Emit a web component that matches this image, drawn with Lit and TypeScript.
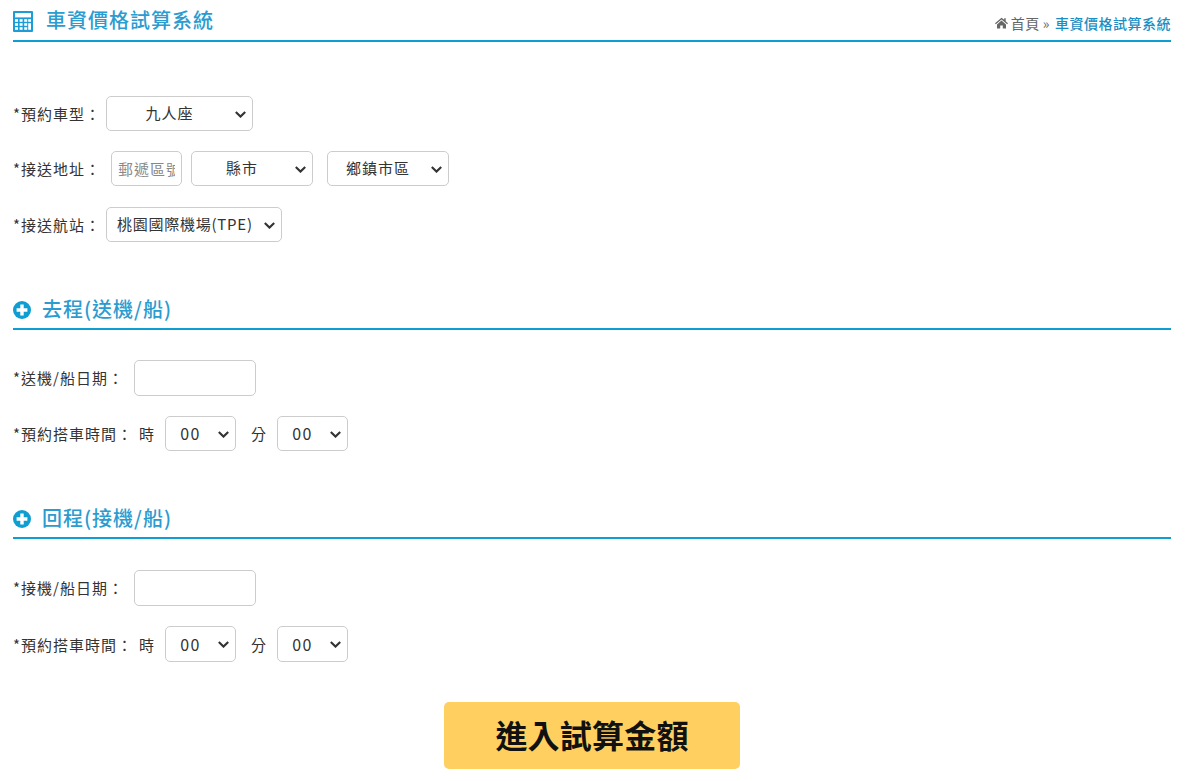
import { LitElement, html, css, svg } from "lit";
import { customElement } from "lit/decorators.js";

@customElement("app-root")
export class AppRoot extends LitElement {
  static styles = css`
    :host {
      display: block;
      width: 1192px;
      height: 781px;
      overflow: hidden;
      background: #fff;
      box-sizing: border-box;
      padding: 0 21px 0 13px;
      font-family: "Noto Sans CJK TC", "Liberation Sans", sans-serif;
      font-size: 15px;
      color: #333;
      letter-spacing: 1px;
    }
    .head {
      height: 42px;
      box-sizing: border-box;
      border-bottom: 2px solid #0f9ed1;
      display: flex;
      justify-content: space-between;
      align-items: flex-start;
    }
    .title {
      display: flex;
      align-items: center;
      gap: 13px;
      height: 40px;
      color: #2b9cd0;
      font-size: 20px;
      font-weight: 500;
      line-height: 40px;
    }
    .title svg { flex: none; margin-top: 2px; }
    .crumb {
      display: flex;
      align-items: center;
      gap: 2px;
      height: 16px;
      margin-top: 15px;
      font-size: 14px;
      letter-spacing: 0.5px;
      color: #666;
    }
    .crumb svg { margin-right: 1px; }
    .crumb .cur { color: #1b8fc4; margin-left: 2px; font-weight: 500; }
    .crumb .sep { margin: 0 1px; color: #666; }
    .form-top { padding-top: 54px; display: flex; flex-direction: column; }
    .row { display: flex; align-items: center; }
    .r1 { height: 35px; margin-bottom: 20px; }
    .r2 { height: 35px; margin-bottom: 21px; }
    .r3 { height: 35px; }
    label { white-space: nowrap; }
    select, input {
      font: inherit;
      letter-spacing: 1px;
      color: #333;
      background: #fff;
      border: 1px solid #ccc;
      border-radius: 5px;
      box-sizing: border-box;
      height: 100%;
      width: 100%;
      outline: none;
    }
    select {
      appearance: none;
      text-align: center;
      padding: 0 24px 2px 4px;
    }
    input { padding: 0 6px; }
    input::placeholder { color: #888; opacity: 1; }
    .sel { position: relative; display: block; height: 100%; flex: none; }
    .sel svg {
      position: absolute;
      right: 7px;
      top: 50%;
      margin-top: -3px;
      pointer-events: none;
    }
    .w-type { width: 147px; margin-left: 5px; }
    .w-zip { width: 71px; margin-left: 10px; flex: none; }
    .w-city { width: 122px; margin-left: 9px; }
    .w-town { width: 122px; margin-left: 14px; }
    .w-air { width: 176px; margin-left: 5px; }
    .w-air select { text-align: left; padding-left: 10px; padding-right: 20px; letter-spacing: 0.75px; }
    .sec {
      height: 41px;
      box-sizing: border-box;
      border-bottom: 2px solid #0f9ed1;
      display: flex;
      align-items: center;
      gap: 11px;
      color: #2b9cd0;
      font-size: 20px;
      font-weight: 500;
      letter-spacing: 1px;
      padding-bottom: 1px;
    }
    .sec svg { margin-top: 3px; }
    .s1 { margin-top: 47px; }
    .s2 { margin-top: 47px; }
    .date { height: 36px; margin-top: 30px; }
    .date label { padding-bottom: 2px; }
    .d2 { margin-top: 31px; }
    .date input { width: 122px; margin-left: 10px; flex: none; }
    .time { height: 35px; margin-top: 20px; }
    .t2 { height: 36px; }
    .t2 select { padding-bottom: 0; }
    .time .sel { width: 71px; }
    .time select { font-size: 16px; letter-spacing: 1.5px; }
    .time .h { margin: 0 10px 0 6px; }
    .time .m { margin: 0 10px 0 15px; }
    .actions { display: flex; justify-content: center; margin-top: 40px; }
    button {
      width: 296px;
      height: 67px;
      border: 0;
      border-radius: 5px;
      background: #ffd05f;
      color: #111;
      font: inherit;
      font-size: 32px;
      font-weight: 700;
      letter-spacing: 0.2px;
      padding: 0 0 4px;
    }
  `;

  private chevron() {
    return html`<svg width="11" height="7" viewBox="0 0 11 7">
      <path d="M.8 1 5.5 5.6 10.2 1" fill="none" stroke="#333" stroke-width="2.1"></path>
    </svg>`;
  }

  private sel(label: string, cls = "") {
    return html`<span class="sel ${cls}">
      <select><option>${label}</option></select>${this.chevron()}
    </span>`;
  }

  private timeRow(cls = "") {
    return html`<div class="row time ${cls}">
      <label>*預約搭車時間：</label><span class="h">時</span>
      ${this.sel("00")}
      <span class="m">分</span>
      ${this.sel("00")}
    </div>`;
  }

  private plus() {
    return html`<svg width="18" height="18" viewBox="0 0 18 18">
      <circle cx="9" cy="9" r="9" fill="#0f9ed1"></circle>
      <path d="M7.3 3.6h3.4v3.7h3.7v3.4h-3.7v3.7H7.3v-3.7H3.6V7.3h3.7z" fill="#fff"></path>
    </svg>`;
  }

  private calc() {
    const cells = [];
    const xs = [2, 6.6, 11.2, 15.2];
    for (let r = 0; r < 3; r++)
      for (let c = 0; c < 4; c++) {
        if (c === 3 && r === 2) continue;
        const h = c === 3 && r === 1 ? 6.6 : 2.6;
        cells.push(svg`<rect x="${xs[c]}" y="${8.2 + r * 4}" width="${c === 3 ? 2.8 : 3}" height="${h}" fill="#fff"></rect>`);
      }
    return html`<svg width="20" height="21" viewBox="0 0 20 21">
      <rect width="20" height="21" rx="1" fill="#1c9dd8"></rect>
      <rect x="2" y="2" width="16" height="4.4" fill="#fff"></rect>
      ${cells}
    </svg>`;
  }

  private home() {
    return html`<svg width="13" height="12" viewBox="0 0 13 12">
      <path d="M6.5.8 0 6.3l.8.9L6.5 2.4l5.7 4.8.8-.9-2.3-2V1.2H9.2v1.5zM2 7.4V11.6h3.2V8.4h2.6v3.2H11V7.4L6.5 3.6z" fill="#666"></path>
    </svg>`;
  }

  render() {
    return html`
      <div class="head">
        <div class="title">${this.calc()}<span>車資價格試算系統</span></div>
        <div class="crumb">
          ${this.home()}<span>首頁</span><span class="sep">»</span><span class="cur">車資價格試算系統</span>
        </div>
      </div>
      <div class="form-top">
        <div class="row r1">
          <label>*預約車型：</label>
          ${this.sel("九人座", "w-type")}
        </div>
        <div class="row r2">
          <label>*接送地址：</label>
          <input class="w-zip" placeholder="郵遞區號" />
          ${this.sel("縣市", "w-city")}
          ${this.sel("鄉鎮市區", "w-town")}
        </div>
        <div class="row r3">
          <label>*接送航站：</label>
          ${this.sel("桃園國際機場(TPE)", "w-air")}
        </div>
      </div>
      <div class="sec s1">${this.plus()}<span>去程(送機/船)</span></div>
      <div class="row date">
        <label>*送機/船日期：</label><input />
      </div>
      ${this.timeRow()}
      <div class="sec s2">${this.plus()}<span>回程(接機/船)</span></div>
      <div class="row date d2">
        <label>*接機/船日期：</label><input />
      </div>
      ${this.timeRow("t2")}
      <div class="actions"><button>進入試算金額</button></div>
    `;
  }
}
